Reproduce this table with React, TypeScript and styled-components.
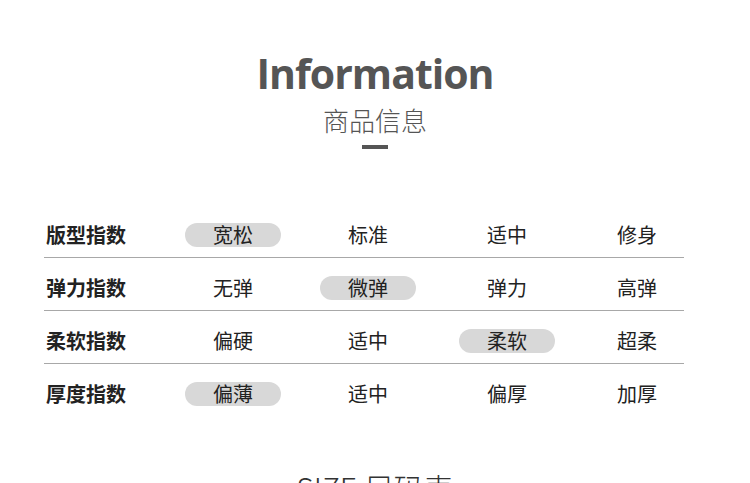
import styled, { createGlobalStyle } from 'styled-components';

const GlobalStyle = createGlobalStyle`
  body {
    margin: 0;
    background: #fff;
    font-family: "Noto Sans", "Noto Sans CJK SC", sans-serif;
  }
`;

type Row = { label: string; options: string[]; active: number };

const rows: Row[] = [
  { label: '版型指数', options: ['宽松', '标准', '适中', '修身'], active: 0 },
  { label: '弹力指数', options: ['无弹', '微弹', '弹力', '高弹'], active: 1 },
  { label: '柔软指数', options: ['偏硬', '适中', '柔软', '超柔'], active: 2 },
  { label: '厚度指数', options: ['偏薄', '适中', '偏厚', '加厚'], active: 0 },
];

function App() {
  return (
    <Page>
      <GlobalStyle />
      <Header>
        <Title>Information</Title>
        <Subtitle>商品信息</Subtitle>
        <Bar />
      </Header>
      <Table>
        {rows.map(row => (
          <TableRow key={row.label}>
            <Cells>
              <Label>{row.label}</Label>
              {row.options.map((opt, j) => (
                <Cell key={opt + j}>
                  <Pill active={j === row.active}>{opt}</Pill>
                </Cell>
              ))}
            </Cells>
          </TableRow>
        ))}
      </Table>
      <NextTitle>SIZE 尺码表</NextTitle>
    </Page>
  );
}

const Page = styled.div`
  width: 750px;
  height: 483px;
  overflow: hidden;
  padding-top: 48px;
  box-sizing: border-box;
`;

const Header = styled.div`
  display: flex;
  flex-direction: column;
  align-items: center;
`;

const Title = styled.h1`
  margin: 0;
  font-family: "Open Sans", "Noto Sans", sans-serif;
  font-weight: 700;
  font-size: 41px;
  line-height: 50px;
  letter-spacing: -1px;
  color: #555;
`;

const Subtitle = styled.div`
  margin-top: 4px;
  font-family: "Noto Sans CJK SC", sans-serif;
  font-weight: 300;
  font-size: 26px;
  line-height: 36px;
  color: #555;
`;

const Bar = styled.div`
  margin-top: 7px;
  width: 26px;
  height: 4px;
  background: #555;
`;

const Table = styled.div`
  margin: 56px 0 0 44px;
  width: 640px;
`;

const TableRow = styled.div`
  height: 53px;
  box-sizing: border-box;
  border-bottom: 1.5px solid #a8a8a8;
  &:last-child {
    border-bottom: none;
  }
`;

const Cells = styled.div`
  display: grid;
  grid-template-columns: 122px 134px 136px 142px 118px;
  align-items: center;
  width: 652px;
  padding-top: 18px;
  font-family: "Noto Sans CJK SC", sans-serif;
  font-size: 20px;
  color: #222;
`;

const Label = styled.div`
  font-weight: 700;
  padding-left: 2px;
  line-height: 24px;
`;

const Cell = styled.div`
  display: flex;
  justify-content: center;
`;

const Pill = styled.span<{ active?: boolean }>`
  display: inline-flex;
  justify-content: center;
  align-items: center;
  width: 96px;
  height: 24px;
  border-radius: 12px;
  background: ${p => (p.active ? '#d8d8d8' : 'transparent')};
  line-height: 24px;
`;

const NextTitle = styled.div`
  margin-top: 50px;
  text-align: center;
  font-family: "Noto Sans CJK SC", sans-serif;
  font-weight: 300;
  font-size: 30px;
  line-height: 40px;
  color: #333;
`;

export default App;
